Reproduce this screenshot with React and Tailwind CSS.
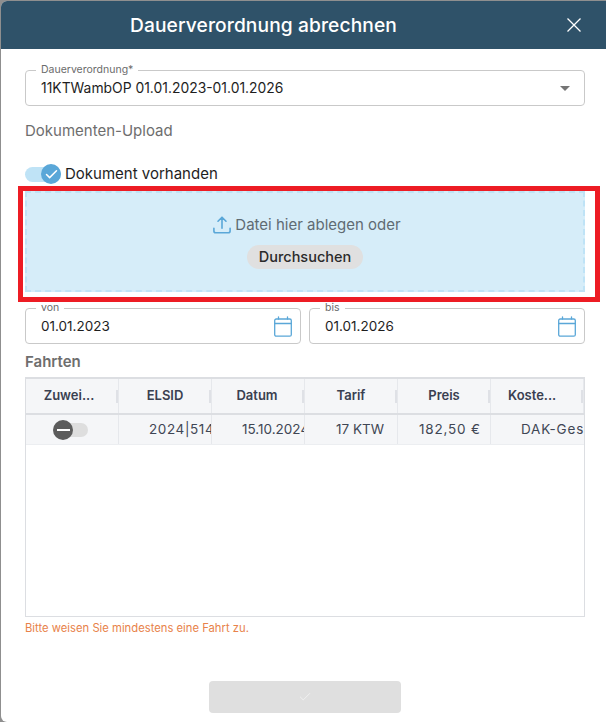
import { Check } from 'lucide-react';

const columns = [
  { title: 'Zuwei...', align: 'justify-center pr-[6px]' },
  { title: 'ELSID', align: 'justify-center' },
  { title: 'Datum', align: 'justify-center pr-[2px]' },
  { title: 'Tarif', align: 'justify-center' },
  { title: 'Preis', align: 'justify-center' },
  { title: 'Koste...', align: 'justify-start pl-[17px]' },
];

function CalendarIcon() {
  return (
    <svg width="18" height="21" viewBox="0 0 18 21" fill="none" stroke="#5aa7d8" strokeWidth="1.3" strokeLinecap="round">
      <rect x="0.7" y="3" width="16.6" height="17.2" rx="1.5" />
      <path d="M0.7 7.5H17.3M4.5 0.8V3M13.5 0.8V3" />
    </svg>
  );
}

function UploadIcon() {
  return (
    <svg width="18" height="18" viewBox="0 0 18 18" fill="none" stroke="#5aa7d8" strokeWidth="1.6" strokeLinecap="round" strokeLinejoin="round">
      <path d="M9 12.2V1.2M5 5.2L9 1.2L13 5.2" />
      <path d="M0.9 12.2V15C0.9 16.1 1.7 16.8 2.8 16.8H15.2C16.3 16.8 17.1 16.1 17.1 15V12.2" />
    </svg>
  );
}

function DateField({ label, value }) {
  return (
    <div className="relative flex h-[36px] flex-1 items-center justify-between rounded border border-[#c9c9c9] pl-[15px] pr-[8px]">
      <span className="absolute -top-[7px] left-[10px] bg-white px-[5px] text-[10.5px] leading-[12px] text-[#6b6b6b]">{label}</span>
      <span className="text-[13.5px] text-[#1e1e1e]">{value}</span>
      <CalendarIcon />
    </div>
  );
}

export default function App() {
  return (
    <div className="relative h-[722px] w-[606px] overflow-hidden bg-[#8f8f8f] font-['Inter',sans-serif]">
      <div className="ml-[1px] mt-[1px] flex h-[721px] flex-col overflow-hidden rounded-l-md bg-white">
        {/* header */}
        <div className="flex h-[48px] shrink-0 items-center bg-[#2f5269] pl-[129px] pr-[25px] text-white">
          <h1 className="flex-1 text-[19.2px] font-medium tracking-[0.1px]">Dauerverordnung abrechnen</h1>
          <svg width="14" height="14" viewBox="0 0 14 14" fill="none" stroke="currentColor" strokeWidth="1.3">
            <path d="M0.5 0.5L13.5 13.5M13.5 0.5L0.5 13.5" />
          </svg>
        </div>

        <div className="flex flex-1 flex-col pl-[24px] pr-[21px]">
          {/* select */}
          <div className="relative mt-[21px] flex h-[36px] items-center justify-between rounded border border-[#c9c9c9] pl-[15px] pr-[14px]">
            <span className="absolute -top-[7px] left-[10px] bg-white px-[5px] text-[10.5px] leading-[12px] text-[#6b6b6b]">Dauerverordnung*</span>
            <span className="text-[13.9px] text-[#1e1e1e]">11KTWambOP 01.01.2023-01.01.2026</span>
            <span className="h-0 w-0 border-x-[5px] border-t-[5px] border-x-transparent border-t-[#757575]" />
          </div>

          <p className="mt-[16px] text-[15px] leading-[18px] text-[#6e6e6e]">Dokumenten-Upload</p>

          {/* toggle */}
          <div className="mt-[24px] flex h-[20px] items-center">
            <div className="relative h-[15px] w-[36px] rounded-full bg-[#bfe3f6]">
              <span className="absolute -top-[2.5px] left-[16px] flex h-[20px] w-[20px] items-center justify-center rounded-full bg-[#5aa7d8]">
                <Check size={15} strokeWidth={2.4} className="text-white" />
              </span>
            </div>
            <span className="ml-[4px] text-[15px] text-[#1e1e1e]">Dokument vorhanden</span>
          </div>

          {/* dropzone */}
          <div className="mt-[7px] flex h-[101px] flex-col items-center border-2 border-dashed border-[#bfe3f6] bg-[#d6edf9] pt-[22px]">
            <div className="ml-[4px] flex items-center gap-[4px]">
              <UploadIcon />
              <span className="text-[15px] leading-[20px] text-[#5f6b73]">Datei hier ablegen oder</span>
            </div>
            <button className="mt-[10px] h-[24px] rounded-full bg-[#e0e0e0] px-[12px] text-[14.5px] font-medium text-[#2b2b2b]">Durchsuchen</button>
          </div>

          {/* dates */}
          <div className="mt-[16px] flex gap-[8px]">
            <DateField label="von" value="01.01.2023" />
            <DateField label="bis" value="01.01.2026" />
          </div>

          <p className="mt-[9px] text-[15px] font-semibold leading-[18px] text-[#6e6e6e]">Fahrten</p>

          {/* table */}
          <div className="mt-[6px] h-[240px] overflow-hidden border border-t-2 border-[#dcdee2]">
            <div className="flex h-[36px] border-b-2 border-[#dcdee2] bg-[#f5f6f8]">
              {columns.map((col) => (
                <div key={col.title} className={`${col.align} relative flex w-[93px] shrink-0 items-center border-r border-[#e6e8ec] text-[13px] font-semibold text-[#3a4050]`}>
                  {col.title}
                  <span className="absolute right-[0px] top-[11px] h-[13px] w-[2px] bg-[#dfe1e6]" />
                </div>
              ))}
            </div>
            <div className="flex h-[30px] border-b border-[#eceef1] bg-[#f5f6f8] text-[13.5px] text-[#3f4654]">
              <div className="flex w-[93px] shrink-0 items-center border-r border-[#e6e8ec] pl-[27px]">
                <div className="relative h-[14px] w-[35px] rounded-full bg-[#dedede]">
                  <span className="absolute -top-[3px] left-0 flex h-[20px] w-[20px] items-center justify-center rounded-full bg-[#5c5c5c]">
                    <span className="h-[2px] w-[13px] bg-white" />
                  </span>
                </div>
              </div>
              <div className="flex w-[93px] shrink-0 items-center overflow-hidden whitespace-nowrap border-r border-[#e6e8ec] pl-[30px] tracking-[0.6px]">2024|5140</div>
              <div className="flex w-[93px] shrink-0 items-center overflow-hidden whitespace-nowrap border-r border-[#e6e8ec] pl-[30px]">15.10.2024</div>
              <div className="flex w-[93px] shrink-0 items-center border-r border-[#e6e8ec] pl-[31px]">17 KTW</div>
              <div className="flex w-[93px] shrink-0 items-center whitespace-nowrap border-r border-[#e6e8ec] pl-[21px] tracking-[0.8px]">182,50 €</div>
              <div className="flex flex-1 items-center overflow-hidden whitespace-nowrap pl-[30px] tracking-[0.8px]">DAK-Gesundheit</div>
            </div>
          </div>

          <p className="mt-[4px] text-[11.25px] leading-[14px] text-[#e8824a]">Bitte weisen Sie mindestens eine Fahrt zu.</p>

          {/* submit */}
          <button className="ml-[184px] mt-[46px] flex h-[32px] w-[192px] items-center justify-center rounded bg-[#dfdfdf]">
            <Check size={14} strokeWidth={1.4} className="text-[#f4f4f4]" />
          </button>
        </div>
      </div>

      {/* annotation box drawn over the page */}
      <div className="pointer-events-none absolute left-[18px] top-[186px] h-[116px] w-[582px] border-[5px] border-[#ed1c24]" />
    </div>
  );
}
